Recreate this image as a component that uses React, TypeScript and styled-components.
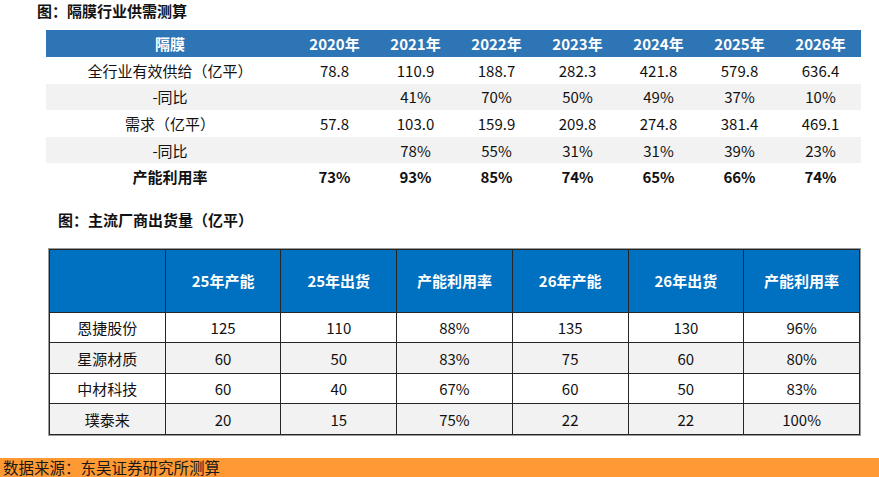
import styled, { createGlobalStyle } from 'styled-components';

const GlobalStyle = createGlobalStyle`
  html, body {
    margin: 0;
    padding: 0;
    background: #ffffff;
  }
  body {
    font-family: "Noto Sans CJK SC", "Liberation Sans", sans-serif;
    color: #111111;
  }
`;

const Page = styled.div`
  width: 879px;
  height: 477px;
  display: flex;
  flex-direction: column;
  overflow: hidden;
`;

const Title = styled.div<{ $left: number; $top: number; $bottom: number }>`
  padding-left: ${({ $left }) => $left}px;
  padding-top: ${({ $top }) => $top}px;
  margin-bottom: ${({ $bottom }) => $bottom}px;
  height: 22px;
  line-height: 22px;
  font-size: 15px;
  font-weight: 700;
  color: #111111;
  white-space: nowrap;
`;

const SupplyTable = styled.table`
  margin-left: 46px;
  width: 815px;
  border-collapse: collapse;
  table-layout: fixed;
  font-size: 15px;

  col.label {
    width: 248px;
  }
`;

const SupplyHead = styled.th`
  height: 27px;
  padding: 0;
  background: #2e75b6;
  color: #ffffff;
  font-weight: 700;
  text-align: center;
  font-size: 15px;
`;

const SupplyRow = styled.tr<{ $shade?: boolean; $bold?: boolean }>`
  height: 26.6px;
  background: ${({ $shade }) => ($shade ? '#f2f2f2' : '#ffffff')};
  font-weight: ${({ $bold }) => ($bold ? 700 : 400)};

  td {
    padding: 0;
    text-align: center;
  }
`;

const VendorTable = styled.table`
  margin-left: 49px;
  width: 811px;
  border-collapse: collapse;
  table-layout: fixed;
  font-size: 15px;
  box-shadow: 0 0 0 1px #9a9a9a;

  th,
  td {
    border: 1px solid #262626;
    padding: 0;
    text-align: center;
  }
`;

const VendorHead = styled.th`
  height: 62px;
  background: #0070c0;
  color: #ffffff;
  font-weight: 700;
  font-size: 15px;
`;

const VendorRow = styled.tr<{ $shade?: boolean }>`
  height: 30.5px;
  background: ${({ $shade }) => ($shade ? '#f2f2f2' : '#ffffff')};
`;

const Footer = styled.div`
  margin-top: auto;
  height: 19px;
  line-height: 19px;
  background: #ff9933;
  padding-left: 3px;
  font-size: 15.5px;
  color: #1a1a1a;
  white-space: nowrap;
`;

const years = ['2020年', '2021年', '2022年', '2023年', '2024年', '2025年', '2026年'];

const supplyRows = [
  { label: '全行业有效供给（亿平）', values: ['78.8', '110.9', '188.7', '282.3', '421.8', '579.8', '636.4'] },
  { label: '-同比', values: ['', '41%', '70%', '50%', '49%', '37%', '10%'], shade: true },
  { label: '需求（亿平）', values: ['57.8', '103.0', '159.9', '209.8', '274.8', '381.4', '469.1'] },
  { label: '-同比', values: ['', '78%', '55%', '31%', '31%', '39%', '23%'], shade: true },
  { label: '产能利用率', values: ['73%', '93%', '85%', '74%', '65%', '66%', '74%'], bold: true },
];

const vendorHeads = ['', '25年产能', '25年出货', '产能利用率', '26年产能', '26年出货', '产能利用率'];

const vendors = [
  ['恩捷股份', '125', '110', '88%', '135', '130', '96%'],
  ['星源材质', '60', '50', '83%', '75', '60', '80%'],
  ['中材科技', '60', '40', '67%', '60', '50', '83%'],
  ['璞泰来', '20', '15', '75%', '22', '22', '100%'],
];

export default function App() {
  return (
    <Page>
      <GlobalStyle />
      <Title $left={37} $top={0} $bottom={8}>图：隔膜行业供需测算</Title>

      <SupplyTable>
        <colgroup>
          <col className="label" />
          {years.map((y) => (
            <col key={y} />
          ))}
        </colgroup>
        <thead>
          <tr>
            <SupplyHead>隔膜</SupplyHead>
            {years.map((y) => (
              <SupplyHead key={y}>{y}</SupplyHead>
            ))}
          </tr>
        </thead>
        <tbody>
          {supplyRows.map((row, i) => (
            <SupplyRow key={i} $shade={row.shade} $bold={row.bold}>
              <td>{row.label}</td>
              {row.values.map((v, j) => (
                <td key={j}>{v}</td>
              ))}
            </SupplyRow>
          ))}
        </tbody>
      </SupplyTable>

      <Title $left={58} $top={19} $bottom={18}>图：主流厂商出货量（亿平）</Title>

      <VendorTable>
        <thead>
          <tr>
            {vendorHeads.map((h, i) => (
              <VendorHead key={i}>{h}</VendorHead>
            ))}
          </tr>
        </thead>
        <tbody>
          {vendors.map((row, i) => (
            <VendorRow key={row[0]} $shade={i % 2 === 1}>
              {row.map((cell, j) => (
                <td key={j}>{cell}</td>
              ))}
            </VendorRow>
          ))}
        </tbody>
      </VendorTable>

      <Footer>数据来源：东吴证券研究所测算</Footer>
    </Page>
  );
}
